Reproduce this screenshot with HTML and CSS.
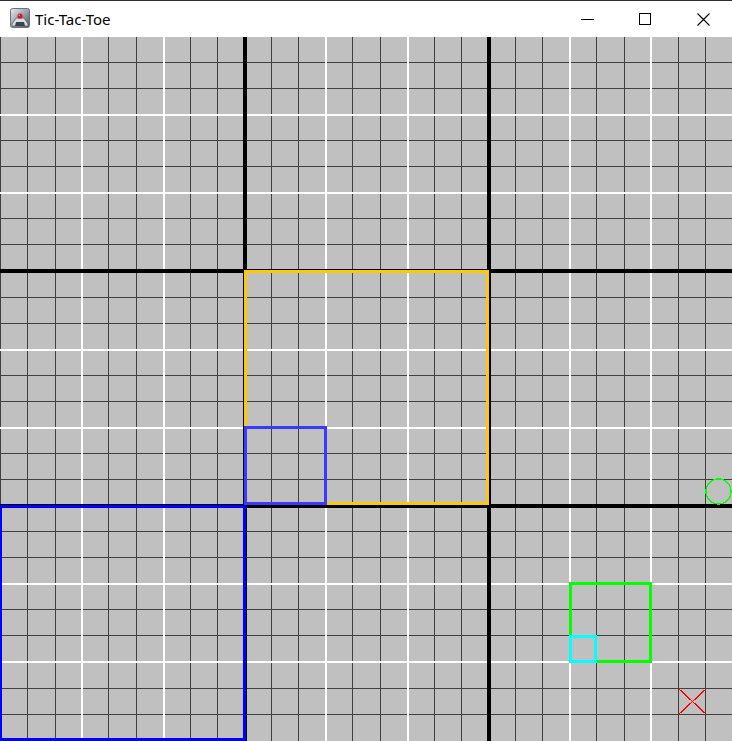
FILE: index.html
```html
<!DOCTYPE html>
<html>
<head>
<meta charset="utf-8">
<title>Tic-Tac-Toe</title>
<link rel="stylesheet" href="styles.css">
</head>
<body>
<div class="window">
  <div class="titlebar">
    <div class="app-icon">
      <svg width="20" height="20" viewBox="0 0 20 20">
        <defs>
          <linearGradient id="ig" x1="0" y1="0" x2="1" y2="1">
            <stop offset="0" stop-color="#e8ecf0"/>
            <stop offset="0.5" stop-color="#9aa4ae"/>
            <stop offset="1" stop-color="#4a525a"/>
          </linearGradient>
        </defs>
        <rect x="0.5" y="0.5" width="19" height="19" rx="2" fill="url(#ig)" stroke="#6a727a"/>
        <path d="M2 16 L6 10 L14 10 L18 16 L18 18 L2 18 Z" fill="#d8dde2" stroke="#5a6168" stroke-width="0.8"/>
        <path d="M5 18 L6 14 L14 14 L15 18" fill="#3b4249"/>
        <circle cx="10" cy="8" r="2.6" fill="#d01818"/>
        <circle cx="9.3" cy="7.3" r="0.9" fill="#ff8080"/>
      </svg>
    </div>
    <div class="title">Tic-Tac-Toe</div>
    <div class="spacer"></div>
    <div class="wbtn">
      <svg width="13" height="13" viewBox="0 0 13 13"><rect x="0" y="6" width="13" height="1" fill="#000"/></svg>
    </div>
    <div class="wbtn">
      <svg width="12" height="12" viewBox="0 0 12 12"><rect x="0.5" y="0.5" width="11" height="11" fill="none" stroke="#000"/></svg>
    </div>
    <div class="wbtn">
      <svg width="13" height="13" viewBox="0 0 13 13"><path d="M0.5 0.5 L12.5 12.5 M12.5 0.5 L0.5 12.5" stroke="#000" stroke-width="1.1"/></svg>
    </div>
  </div>
  <svg class="board" width="732" height="704" viewBox="0 37 732 704" shape-rendering="crispEdges">
    <rect x="0" y="37" width="732" height="704" fill="#c0c0c0"/>
    <g fill="#404040">
      <rect x="0" y="37" width="1" height="704"/>
      <rect x="27" y="37" width="1" height="704"/>
      <rect x="55" y="37" width="1" height="704"/>
      <rect x="108" y="37" width="1" height="704"/>
      <rect x="136" y="37" width="1" height="704"/>
      <rect x="190" y="37" width="1" height="704"/>
      <rect x="217" y="37" width="1" height="704"/>
      <rect x="271" y="37" width="1" height="704"/>
      <rect x="298" y="37" width="1" height="704"/>
      <rect x="352" y="37" width="1" height="704"/>
      <rect x="380" y="37" width="1" height="704"/>
      <rect x="434" y="37" width="1" height="704"/>
      <rect x="461" y="37" width="1" height="704"/>
      <rect x="515" y="37" width="1" height="704"/>
      <rect x="542" y="37" width="1" height="704"/>
      <rect x="596" y="37" width="1" height="704"/>
      <rect x="624" y="37" width="1" height="704"/>
      <rect x="678" y="37" width="1" height="704"/>
      <rect x="705" y="37" width="1" height="704"/>

      <rect x="0" y="62" width="732" height="1"/>
      <rect x="0" y="88" width="732" height="1"/>
      <rect x="0" y="140" width="732" height="1"/>
      <rect x="0" y="166" width="732" height="1"/>
      <rect x="0" y="218" width="732" height="1"/>
      <rect x="0" y="244" width="732" height="1"/>
      <rect x="0" y="297" width="732" height="1"/>
      <rect x="0" y="323" width="732" height="1"/>
      <rect x="0" y="375" width="732" height="1"/>
      <rect x="0" y="401" width="732" height="1"/>
      <rect x="0" y="453" width="732" height="1"/>
      <rect x="0" y="479" width="732" height="1"/>
      <rect x="0" y="531" width="732" height="1"/>
      <rect x="0" y="557" width="732" height="1"/>
      <rect x="0" y="609" width="732" height="1"/>
      <rect x="0" y="635" width="732" height="1"/>
      <rect x="0" y="688" width="732" height="1"/>
      <rect x="0" y="714" width="732" height="1"/>
    </g>
    <g fill="#ffffff">
      <rect x="81" y="37" width="2" height="704"/>
      <rect x="163" y="37" width="2" height="704"/>
      <rect x="325" y="37" width="2" height="704"/>
      <rect x="407" y="37" width="2" height="704"/>
      <rect x="569" y="37" width="2" height="704"/>
      <rect x="650" y="37" width="2" height="704"/>

      <rect x="0" y="114" width="732" height="2"/>
      <rect x="0" y="192" width="732" height="2"/>
      <rect x="0" y="349" width="732" height="2"/>
      <rect x="0" y="427" width="732" height="2"/>
      <rect x="0" y="583" width="732" height="2"/>
      <rect x="0" y="661" width="732" height="2"/>
    </g>
    <g fill="#000000">
      <rect x="243" y="37" width="4" height="704"/>
      <rect x="487" y="37" width="4" height="704"/>
      <rect x="0" y="269" width="732" height="4"/>
      <rect x="0" y="504" width="732" height="4"/>
    </g>
    <!-- bottom-left big board highlight -->
    <g fill="#0000ff">
      <rect x="0" y="505" width="246" height="3"/>
      <rect x="0" y="505" width="2" height="236"/>
      <rect x="243" y="505" width="3" height="236"/>
      <rect x="0" y="738" width="246" height="3"/>
    </g>
    <!-- center big board highlight -->
    <g fill="#ffc800">
      <rect x="244" y="270" width="245" height="3"/>
      <rect x="244" y="270" width="3" height="235"/>
      <rect x="486" y="270" width="3" height="235"/>
      <rect x="244" y="502" width="245" height="3"/>
    </g>
    <!-- mini board highlight -->
    <g fill="#3a3aff">
      <rect x="244" y="426" width="83" height="3"/>
      <rect x="244" y="426" width="3" height="79"/>
      <rect x="324" y="426" width="3" height="79"/>
      <rect x="244" y="502" width="83" height="3"/>
    </g>
    <!-- green mini board -->
    <g fill="#00ff00">
      <rect x="569" y="582" width="83" height="3"/>
      <rect x="569" y="582" width="3" height="81"/>
      <rect x="649" y="582" width="3" height="81"/>
      <rect x="569" y="660" width="83" height="3"/>
    </g>
    <!-- cyan cell -->
    <g fill="#00ffff">
      <rect x="569" y="635" width="28" height="3"/>
      <rect x="569" y="635" width="3" height="28"/>
      <rect x="594" y="635" width="3" height="28"/>
      <rect x="569" y="660" width="28" height="3"/>
    </g>
    <circle cx="718.5" cy="491.5" r="12.5" fill="none" stroke="#00ff00" stroke-width="1.4"/>
    <g stroke="#ff0000" stroke-width="1.2">
      <line x1="678.5" y1="688.5" x2="706.5" y2="714.5"/>
      <line x1="706.5" y1="688.5" x2="678.5" y2="714.5"/>
    </g>
  </svg>
</div>
</body>
</html>
```

FILE: styles.css
```css
html, body {
  margin: 0;
  padding: 0;
  background: #ffffff;
  overflow: hidden;
}

.window {
  width: 732px;
  height: 741px;
  display: flex;
  flex-direction: column;
  overflow: hidden;
}

.titlebar {
  height: 36px;
  border-top: 1px solid #2e2e2e;
  background: #ffffff;
  display: flex;
  align-items: center;
  flex: none;
  box-sizing: content-box;
}

.app-icon {
  width: 20px;
  height: 20px;
  margin-left: 10px;
  margin-top: -2px;
}

.app-icon svg {
  display: block;
}

.title {
  margin-left: 5px;
  margin-top: -1px;
  font-family: "Noto Sans", "Open Sans", sans-serif;
  font-size: 15px;
  color: #000000;
  white-space: nowrap;
}

.spacer {
  flex: 1;
}

.wbtn {
  width: 58px;
  height: 36px;
  display: flex;
  align-items: center;
  justify-content: center;
}

.wbtn svg {
  display: block;
}

.board {
  display: block;
  flex: none;
}
```
